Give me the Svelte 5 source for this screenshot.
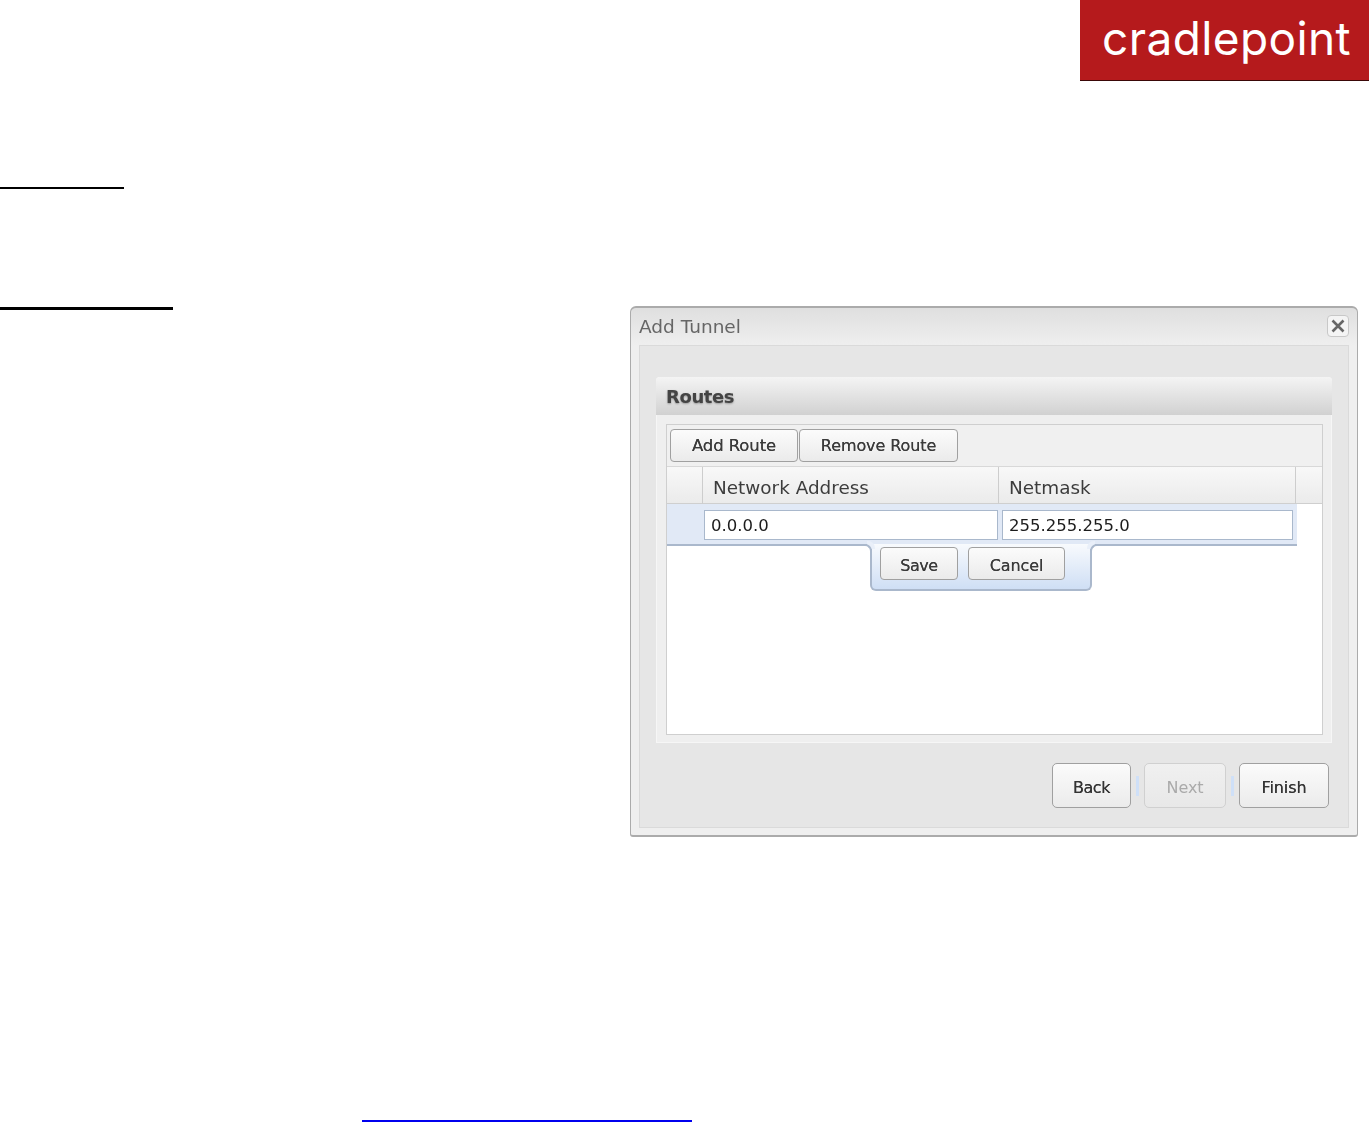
<script>
	const columns = ['Network Address', 'Netmask'];
	const values = ['0.0.0.0', '255.255.255.0'];
</script>

<div class="page">
	<header class="top">
		<div class="logo">cradlepoint</div>
	</header>

	<div class="content">
		<div class="left">
			<div class="rule short"></div>
			<div class="rule long"></div>
		</div>

		<div class="dialog">
			<div class="titlebar">
				<span class="title">Add Tunnel</span>
				<button class="close" aria-label="Close">
					<svg width="14" height="14" viewBox="0 0 14 14">
						<path d="M1.5 1.5 L12.5 12.5 M12.5 1.5 L1.5 12.5" stroke="#666" stroke-width="2.6" fill="none" />
					</svg>
				</button>
			</div>

			<div class="body">
				<div class="panel">
					<div class="panel-head">Routes</div>
					<div class="panel-body">
						<div class="grid">
							<div class="toolbar">
								<button class="btn add">Add Route</button>
								<button class="btn remove">Remove Route</button>
							</div>
							<div class="columns">
								<div class="col-check"></div>
								{#each columns as col}
									<div class="col">{col}</div>
								{/each}
							</div>
							<div class="editor">
								<div class="editor-row">
									{#each values as value}
										<input class="field" {value} readonly />
									{/each}
								</div>
								<div class="editor-actions">
									<button class="btn save">Save</button>
									<button class="btn cancel">Cancel</button>
								</div>
							</div>
						</div>
					</div>
				</div>

				<div class="footer">
					<button class="btn big back">Back</button>
					<span class="sep"></span>
					<button class="btn big next" disabled>Next</button>
					<span class="sep"></span>
					<button class="btn big finish">Finish</button>
				</div>
			</div>
		</div>
	</div>

	<div class="link-rule"></div>
</div>

<style>
	:global(body) {
		margin: 0;
		background: #fff;
	}

	.page {
		height: 1122px;
		overflow: hidden;
		font-family: 'DejaVu Sans', sans-serif;
	}

	.top {
		display: flex;
		justify-content: flex-end;
	}

	.logo {
		box-sizing: border-box;
		width: 289px;
		height: 81px;
		padding-left: 22px;
		background: #b51a1c;
		border-bottom: 1px solid #3a0808;
		color: #fff;
		font-family: 'Inter', sans-serif;
		font-weight: 400;
		font-size: 46px;
		line-height: 77px;
		letter-spacing: 0.4px;
	}

	.content {
		display: grid;
		grid-template-columns: 630px 728px;
		margin-top: 106px;
	}

	.rule {
		background: #000;
	}

	.rule.short {
		width: 124px;
		height: 2px;
	}

	.rule.long {
		width: 173px;
		height: 3px;
		margin-top: 118px;
	}

	.dialog {
		box-sizing: border-box;
		margin-top: 119px;
		height: 531px;
		padding: 0 8px 8px;
		border: 1px solid #ababab;
		border-top-width: 2px;
		border-bottom-width: 2px;
		border-radius: 6px 6px 3px 3px;
		background: linear-gradient(#dfdfdf, #efefef 38px);
		filter: blur(0.45px);
	}

	.titlebar {
		display: flex;
		justify-content: space-between;
		align-items: center;
		height: 37px;
	}

	.title {
		color: #666;
		font-size: 18.5px;
	}

	.close {
		width: 22px;
		height: 22px;
		padding: 0;
		margin-top: -2px;
		display: flex;
		align-items: center;
		justify-content: center;
		background: #f4f4f4;
		border: 1px solid #c8c8c8;
		border-radius: 4px;
	}

	.body {
		box-sizing: border-box;
		height: 483px;
		padding: 31px 16px 0;
		background: #e6e6e6;
		border: 1px solid #dadada;
	}

	.panel {
		height: 366px;
		box-sizing: border-box;
		background: #efefef;
		border-radius: 4px 4px 0 0;
		box-shadow: inset 0 0 0 1px #f6f6f6;
	}

	.panel-head {
		box-sizing: border-box;
		height: 38px;
		padding-left: 10px;
		line-height: 40px;
		font-size: 18px;
		font-weight: bold;
		letter-spacing: -0.4px;
		color: #444;
		text-shadow: 0 1px 2px #999;
		background: linear-gradient(#f4f4f4, #d1d1d1);
		border-radius: 4px 4px 0 0;
	}

	.panel-body {
		padding: 9px 9px 8px 10px;
	}

	.grid {
		box-sizing: border-box;
		height: 311px;
		background: #fff;
		border: 1px solid #cfcfcf;
	}

	.toolbar {
		box-sizing: border-box;
		height: 42px;
		padding-top: 4px;
		padding-left: 3px;
		display: flex;
		gap: 1px;
		align-items: flex-start;
		background: #f0f0f0;
		border-bottom: 1px solid #d8d8d8;
	}

	.btn {
		box-sizing: border-box;
		height: 33px;
		padding: 0;
		font-family: inherit;
		font-size: 16px;
		letter-spacing: -0.1px;
		color: #3a3a3a;
		text-shadow: 0 0 0.6px #444;
		background: linear-gradient(#fbfbfb, #ebebeb);
		border: 1px solid #a0a0a0;
		border-radius: 4px;
	}

	.add {
		width: 128px;
		font-size: 16.5px;
	}

	.remove {
		width: 159px;
	}

	.columns {
		display: grid;
		grid-template-columns: 36px 296px 297px 1fr;
		height: 37px;
		background: linear-gradient(#f8f8f8, #ebebeb);
		border-bottom: 1px solid #cfcfcf;
		box-sizing: border-box;
	}

	.col-check {
		border-right: 1px solid #cdcdcd;
	}

	.col {
		padding-left: 10px;
		line-height: 41px;
		font-size: 18.4px;
		color: #3c3c3c;
		border-right: 1px solid #cdcdcd;
	}

	.editor {
		position: relative;
		width: 630px;
	}

	.editor-row {
		box-sizing: border-box;
		height: 42px;
		padding: 6px 4px 0 37px;
		display: flex;
		gap: 4px;
		background: #e1e9f6;
		border-bottom: 2px solid #aab8cc;
	}

	.field {
		box-sizing: border-box;
		width: 294px;
		height: 30px;
		padding: 0 0 0 6px;
		font-family: inherit;
		font-size: 16.5px;
		color: #1c1c1c;
		background: #fff;
		border: 1px solid #a9b8cc;
		outline: none;
	}

	.field:last-child {
		width: 291px;
	}

	/* floats under the row being edited */
	.editor-actions {
		position: absolute;
		top: 40px;
		left: 203px;
		box-sizing: border-box;
		width: 222px;
		height: 47px;
		padding: 3px 0 0 8px;
		display: flex;
		gap: 10px;
		background: linear-gradient(#f8fafd, #cfdff5);
		border: 2px solid #aab8cc;
		border-top: none;
		border-radius: 0 0 6px 6px;
	}

	.editor-actions::before,
	.editor-actions::after {
		content: '';
		position: absolute;
		top: 0;
		box-sizing: border-box;
		width: 8px;
		height: 8px;
		background: #fff;
		border-top: 2px solid #aab8cc;
	}

	.editor-actions::before {
		left: -8px;
		border-right: 2px solid #aab8cc;
		border-top-right-radius: 7px;
		box-shadow: 3px -3px 0 0 #e9eff9;
	}

	.editor-actions::after {
		right: -8px;
		border-left: 2px solid #aab8cc;
		border-top-left-radius: 7px;
		box-shadow: -3px -3px 0 0 #e9eff9;
	}

	.save {
		width: 78px;
		padding-top: 3px;
		letter-spacing: -0.5px;
	}

	.cancel {
		width: 97px;
		padding-top: 3px;
	}

	.footer {
		display: flex;
		justify-content: flex-end;
		align-items: center;
		gap: 5px;
		margin-top: 20px;
		padding-right: 3px;
	}

	.big {
		height: 45px;
		padding-top: 4px;
		border-radius: 5px;
		font-size: 16px;
		color: #333;
	}

	.back {
		width: 79px;
		letter-spacing: -0.4px;
	}

	.next {
		width: 82px;
		color: #aaa;
		text-shadow: none;
		border-color: #d0d0d0;
		background: linear-gradient(#f0f0f0, #e8e8e8);
	}

	.finish {
		width: 90px;
	}

	.sep {
		width: 3px;
		height: 20px;
		background: #cfe0f8;
	}

	.link-rule {
		width: 330px;
		height: 2px;
		margin: 283px 0 0 362px;
		background: #0000ee;
	}
</style>
